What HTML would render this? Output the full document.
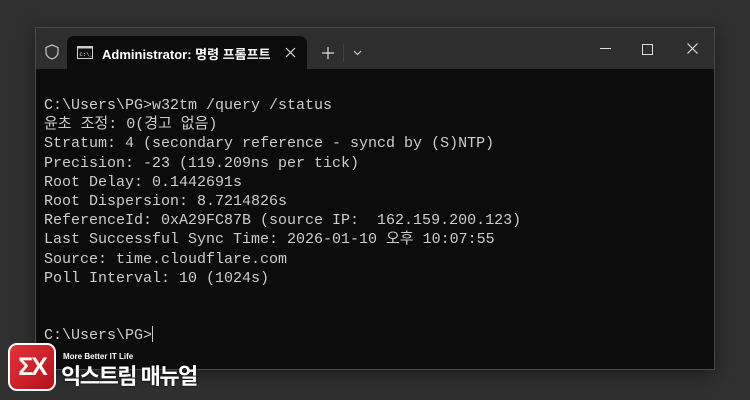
<!DOCTYPE html>
<html><head><meta charset="utf-8"><style>
html,body{margin:0;padding:0;width:750px;height:400px;overflow:hidden;background:#303030;font-family:"Liberation Sans","Noto Sans CJK KR",sans-serif}
.win{position:absolute;left:35px;top:27px;width:680px;height:343px;background:#0c0c0c;border:1px solid #4a4a4a;box-sizing:border-box;box-shadow:0 4px 18px rgba(0,0,0,.45)}
.tb{position:absolute;left:0;top:0;right:0;height:41px;background:#2e2e2e}
.tab{position:absolute;left:31px;top:8px;width:240px;height:33px;background:#0c0c0c;border-radius:7px 7px 0 0}
.tab .t{position:absolute;left:35px;top:8px;color:#fff;font-size:13px;font-weight:bold;white-space:nowrap}
pre{position:absolute;left:8px;top:68px;margin:0;color:#cccccc;font-family:"Liberation Mono","Noto Sans CJK KR",monospace;font-size:15px;line-height:19.2px}
.logo{position:absolute;left:8px;top:343px;white-space:nowrap}
</style></head><body>
<div class="win">
 <div class="tb">
  <svg style="position:absolute;left:9px;top:16px" width="14" height="16" viewBox="0 0 14 16"><path d="M7 1 L13 3.5 V8 C13 12 10 14 7 15 C4 14 1 12 1 8 V3.5 Z" fill="none" stroke="#bbb" stroke-width="1.3"/></svg>
  <div class="tab">
   <svg style="position:absolute;left:10px;top:10px" width="16" height="13" viewBox="0 0 16 13"><rect x=".5" y=".5" width="15" height="12" fill="#111" stroke="#ccc"/><rect x=".5" y=".5" width="15" height="2" fill="#ccc"/><text x="2.5" y="10" font-size="5.5" fill="#ddd" font-family="Liberation Mono">C:\_</text></svg>
   <div class="t">Administrator: 명령 프롬프트</div>
   <svg style="position:absolute;left:218px;top:11px" width="11" height="11"><path d="M1 1L10 10M10 1L1 10" stroke="#ddd" stroke-width="1.2"/></svg>
  </div>
  <svg style="position:absolute;left:286px;top:19px" width="12" height="12"><path d="M6 0V12M0 6H12" stroke="#ddd" stroke-width="1.2"/></svg>
  <div style="position:absolute;left:307px;top:16px;width:1px;height:18px;background:#444"></div>
  <svg style="position:absolute;left:317px;top:22px" width="9" height="6"><path d="M1 1L4.5 4.5L8 1" stroke="#ccc" stroke-width="1.2" fill="none"/></svg>
  <div style="position:absolute;left:564px;top:20px;width:11px;height:1px;background:#ddd"></div>
  <div style="position:absolute;left:606px;top:16px;width:9px;height:9px;border:1px solid #ddd"></div>
  <svg style="position:absolute;left:651px;top:15px" width="11" height="11"><path d="M.5 .5L10.5 10.5M10.5 .5L.5 10.5" stroke="#ddd" stroke-width="1.2"/></svg>
 </div>
 <pre>C:\Users\PG>w32tm /query /status
윤초 조정: 0(경고 없음)
Stratum: 4 (secondary reference - syncd by (S)NTP)
Precision: -23 (119.209ns per tick)
Root Delay: 0.1442691s
Root Dispersion: 8.7214826s
ReferenceId: 0xA29FC87B (source IP:  162.159.200.123)
Last Successful Sync Time: 2026-01-10 오후 10:07:55
Source: time.cloudflare.com
Poll Interval: 10 (1024s)


C:\Users\PG><span style="display:inline-block;width:1px;height:16px;background:#ccc;vertical-align:-3px"></span></pre>
</div>
<div class="logo">
 <div style="position:absolute;left:0;top:0;width:48px;height:48px;background:linear-gradient(135deg,#e8313b,#b3121c);border:2px solid #fff;border-radius:9px;box-sizing:border-box;color:#fff;font-weight:bold;font-size:25px;line-height:44px;text-align:center;letter-spacing:-2px">ΣX</div>
 <div style="position:absolute;left:55px;top:9px;color:#fff;font-size:8px;font-weight:bold">More Better IT Life</div>
 <div style="position:absolute;left:53px;top:16px;color:#fff;font-size:22px;font-weight:bold;letter-spacing:-1.5px;text-shadow:0 0 2px #000">익스트림 매뉴얼</div>
</div>
</body></html>
